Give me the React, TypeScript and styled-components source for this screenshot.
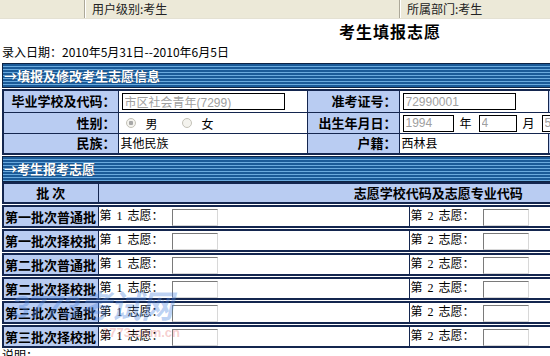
import React from "react";
import styled, { createGlobalStyle } from "styled-components";

const GlobalStyle = createGlobalStyle`
  html, body {
    margin: 0;
    padding: 0;
    overflow: hidden;
    background: #fff;
  }
  body {
    font-family: "Noto Sans CJK SC", "Liberation Sans", sans-serif;
    font-size: 12px;
    color: #000;
  }
`;

const NAVY = "#14264f";
const LABEL_BG = "#b9ccf2";

const Page = styled.div`
  position: relative;
  width: 780px;
`;

/* ── 상단 사용자 정보 바 ── */
const TopBar = styled.div`
  display: flex;
  height: 18px;
  background: #ece9d8;
  border-bottom: 1px solid #e4e1d3;
`;

const TopCell = styled.div<{ $w?: number }>`
  ${({ $w }) => ($w ? `width: ${$w}px; flex: none;` : "flex: 1;")}
  box-sizing: border-box;
  padding-left: 7px;
  line-height: 18px;
  color: #222;
  border-right: 1px solid #aca899;
  box-shadow: 1px 0 0 #fff;
`;

const Title = styled.h1`
  margin: 2px 0 0;
  font-size: 16px;
  line-height: 20px;
  font-weight: bold;
  text-align: center;
  letter-spacing: 1px;
`;

const DateLine = styled.div`
  margin: 4px 0 0 2px;
  line-height: 14px;
`;

/* ── 줄무늬 섹션 헤더 ── */
const SectionBar = styled.div<{ $h: number; $top: number }>`
  margin: ${({ $top }) => $top}px 0 0 2px;
  height: ${({ $h }) => $h}px;
  border: 1px solid #0d2344;
  background: repeating-linear-gradient(
    to bottom,
    #1a5a98 0px,
    #1a5a98 2px,
    #6aaade 2px,
    #6aaade 3px
  );
  color: #fff;
  font-weight: bold;
  font-size: 13px;
  line-height: ${({ $h }) => $h}px;
  padding-left: 1px;
  text-shadow: 0 0 1px #0d2344;
`;

const Grid = styled.table<{ $top: number }>`
  margin: ${({ $top }) => $top}px 0 0 2px;
  width: 778px;
  border-collapse: collapse;
  table-layout: fixed;
  border: 2px solid ${NAVY};
`;

const Cell = styled.td<{ $label?: boolean; $align?: string; $h?: number; $pad?: number }>`
  box-sizing: border-box;
  height: ${({ $h }) => $h ?? 21}px;
  padding: 0 2px 0 ${({ $pad }) => $pad ?? 2}px;
  border: 1px solid ${NAVY};
  background: ${({ $label }) => ($label ? LABEL_BG : "#fff")};
  font-weight: ${({ $label }) => ($label ? "bold" : "normal")};
  font-size: ${({ $label }) => ($label ? "13px" : "12px")};
  line-height: 16px;
  text-align: ${({ $align, $label }) => $align ?? ($label ? "right" : "left")};
  white-space: nowrap;
  overflow: hidden;
  vertical-align: middle;
`;

const ReadField = styled.input<{ $w: number }>`
  box-sizing: border-box;
  width: ${({ $w }) => $w}px;
  height: 17px;
  margin: 0 0 0 1px;
  padding: 0 2px;
  border: 1px solid #000;
  font-family: "Liberation Sans", "Noto Sans CJK SC", sans-serif;
  font-size: 12px;
  color: #a0a0a0;
  background: #fff;
  vertical-align: middle;
  outline: none;
`;

const Unit = styled.span`
  display: inline-block;
  margin: 0 6px 0 6px;
  vertical-align: middle;
`;

const Radio = styled.span<{ $on?: boolean }>`
  display: inline-block;
  box-sizing: border-box;
  width: 10px;
  height: 10px;
  margin: 0 10px 0 ${({ $on }) => ($on ? 5 : 24)}px;
  border-radius: 50%;
  border: 1px solid #c4c2b8;
  background: ${({ $on }) =>
    $on ? "radial-gradient(circle, #a8a8a8 0 2px, #f4f3ee 2.5px)" : "#f4f3ee"};
  vertical-align: middle;
`;

const ChoiceText = styled.span`
  vertical-align: middle;
`;

const BatchField = styled.input`
  box-sizing: border-box;
  width: 46px;
  height: 17px;
  margin-left: 8px;
  padding: 0;
  border: 1px solid;
  border-color: #7a7a7a #d8d8d8 #d8d8d8 #7a7a7a;
  background: #fff;
  vertical-align: middle;
  outline: none;
`;

const Num = styled.span`
  display: inline-block;
  width: 16px;
  text-align: center;
  font-family: "Liberation Serif", serif;
`;

const Note = styled.div`
  margin: 0 0 0 2px;
  line-height: 14px;
`;

/* ── 워터마크 ── */
const Watermark = styled.div`
  position: absolute;
  left: 12px;
  top: 290px;
  pointer-events: none;
`;

const WmBig = styled.div`
  font-family: "Liberation Sans", "Noto Sans CJK SC", sans-serif;
  font-size: 32px;
  font-weight: bold;
  font-style: italic;
  color: rgba(80, 135, 225, 0.38);
  letter-spacing: -1px;
  line-height: 34px;
`;

const WmSmall = styled.div`
  margin: 1px 0 0 90px;
  font-family: "Liberation Sans", sans-serif;
  font-size: 13px;
  font-weight: bold;
  color: rgba(225, 90, 90, 0.3);
`;

const batches = [
  "第一批次普通批",
  "第一批次择校批",
  "第二批次普通批",
  "第二批次择校批",
  "第三批次普通批",
  "第三批次择校批",
];

export default function App() {
  return (
    <>
      <GlobalStyle />
      <Page>
        <TopBar>
          <TopCell $w={85} />
          <TopCell $w={315}>用户级别:考生</TopCell>
          <TopCell>所属部门:考生</TopCell>
        </TopBar>

        <Title>考生填报志愿</Title>
        <DateLine>录入日期：2010年5月31日--2010年6月5日</DateLine>

        <SectionBar $h={23} $top={4}>→填报及修改考生志愿信息</SectionBar>
        <Grid $top={1}>
          <colgroup>
            <col style={{ width: 115 }} />
            <col style={{ width: 189 }} />
            <col style={{ width: 92 }} />
            <col style={{ width: 149 }} />
            <col style={{ width: 93 }} />
            <col />
          </colgroup>
          <tbody>
            <tr>
              <Cell $label $h={22}>毕业学校及代码：</Cell>
              <Cell $h={22}>
                <ReadField $w={163} readOnly defaultValue="市区社会青年(7299)" />
              </Cell>
              <Cell $label $h={22}>准考证号：</Cell>
              <Cell $h={22}>
                <ReadField $w={113} readOnly defaultValue="72990001" />
              </Cell>
              <Cell $label $h={22} />
              <Cell $h={22} />
            </tr>
            <tr>
              <Cell $label>性别：</Cell>
              <Cell>
                <Radio $on />
                <ChoiceText>男</ChoiceText>
                <Radio />
                <ChoiceText>女</ChoiceText>
              </Cell>
              <Cell $label>出生年月日：</Cell>
              <Cell colSpan={3}>
                <ReadField $w={51} readOnly defaultValue="1994" />
                <Unit>年</Unit>
                <ReadField $w={38} readOnly defaultValue="4" />
                <Unit>月</Unit>
                <ReadField $w={38} readOnly defaultValue="5" />
                <Unit>日</Unit>
              </Cell>
            </tr>
            <tr>
              <Cell $label>民族：</Cell>
              <Cell>其他民族</Cell>
              <Cell $label>户籍：</Cell>
              <Cell>西林县</Cell>
              <Cell $label />
              <Cell />
            </tr>
          </tbody>
        </Grid>

        <SectionBar $h={24} $top={1}>→考生报考志愿</SectionBar>
        <Grid $top={0}>
          <colgroup>
            <col style={{ width: 95 }} />
            <col />
          </colgroup>
          <tbody>
            <tr>
              <Cell $label $align="center" $h={20}>批 次</Cell>
              <Cell $label $align="center" $h={20}>志愿学校代码及志愿专业代码</Cell>
            </tr>
          </tbody>
        </Grid>

        {batches.map((name) => (
          <Grid $top={1} key={name}>
            <colgroup>
              <col style={{ width: 95 }} />
              <col style={{ width: 311 }} />
              <col />
            </colgroup>
            <tbody>
              <tr>
                <Cell $label $align="left" $h={21} $pad={1}>
                  {name}
                </Cell>
                <Cell $h={21} $pad={1}>
                  第<Num>1</Num>志愿：<BatchField readOnly />
                </Cell>
                <Cell $h={21} $pad={1}>
                  第<Num>2</Num>志愿：<BatchField readOnly />
                </Cell>
              </tr>
            </tbody>
          </Grid>
        ))}

        <Note>说明：</Note>

        <Watermark>
          <WmBig>3773考试网</WmBig>
          <WmSmall>3773.com.cn</WmSmall>
        </Watermark>
      </Page>
    </>
  );
}
